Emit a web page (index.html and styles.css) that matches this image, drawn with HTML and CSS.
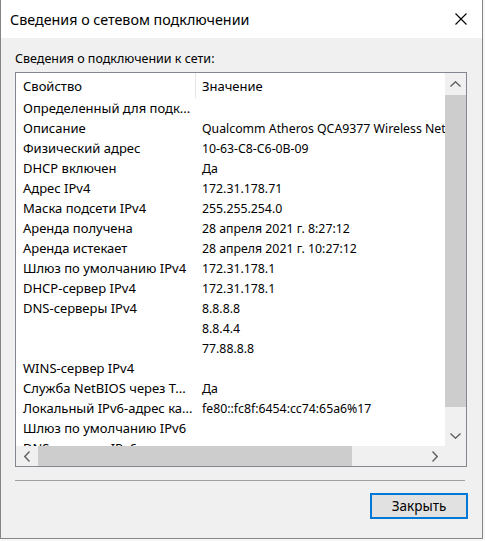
FILE: index.html
```html
<!DOCTYPE html>
<html lang="ru">
<head>
<meta charset="utf-8">
<title>Сведения о сетевом подключении</title>
<link rel="stylesheet" href="styles.css">
</head>
<body>
<div class="window">
  <div class="titlebar">
    <span class="title">Сведения о сетевом подключении</span>
    <svg class="close" width="12" height="12" viewBox="0 0 12 12"><path d="M0.5 0.5 L11.5 11.5 M11.5 0.5 L0.5 11.5" stroke="#000" stroke-width="1.1" fill="none"/></svg>
  </div>
  <div class="content">
    <div class="label">Сведения о подключении к сети:</div>
    <div class="listbox">
      <div class="viewport">
        <div class="hrow"><div class="hc1">Свойство</div><div class="hc2">Значение</div></div>
        <div class="row"><div class="c1">Определенный для подк...</div><div class="c2"></div></div>
        <div class="row"><div class="c1">Описание</div><div class="c2">Qualcomm Atheros QCA9377 Wireless Network Adapter</div></div>
        <div class="row"><div class="c1">Физический адрес</div><div class="c2">10-63-C8-C6-0B-09</div></div>
        <div class="row"><div class="c1">DHCP включен</div><div class="c2">Да</div></div>
        <div class="row"><div class="c1">Адрес IPv4</div><div class="c2">172.31.178.71</div></div>
        <div class="row"><div class="c1">Маска подсети IPv4</div><div class="c2">255.255.254.0</div></div>
        <div class="row"><div class="c1">Аренда получена</div><div class="c2">28 апреля 2021 г. 8:27:12</div></div>
        <div class="row"><div class="c1">Аренда истекает</div><div class="c2">28 апреля 2021 г. 10:27:12</div></div>
        <div class="row"><div class="c1">Шлюз по умолчанию IPv4</div><div class="c2">172.31.178.1</div></div>
        <div class="row"><div class="c1">DHCP-сервер IPv4</div><div class="c2">172.31.178.1</div></div>
        <div class="row"><div class="c1">DNS-серверы IPv4</div><div class="c2">8.8.8.8</div></div>
        <div class="row"><div class="c1"></div><div class="c2">8.8.4.4</div></div>
        <div class="row"><div class="c1"></div><div class="c2">77.88.8.8</div></div>
        <div class="row"><div class="c1">WINS-сервер IPv4</div><div class="c2"></div></div>
        <div class="row"><div class="c1">Служба NetBIOS через T...</div><div class="c2">Да</div></div>
        <div class="row"><div class="c1">Локальный IPv6-адрес ка...</div><div class="c2">fe80::fc8f:6454:cc74:65a6%17</div></div>
        <div class="row"><div class="c1">Шлюз по умолчанию IPv6</div><div class="c2"></div></div>
        <div class="row"><div class="c1">DNS-серверы IPv6</div><div class="c2"></div></div>
      </div>
      <div class="vscroll">
        <div class="sbtn"><svg width="11" height="6" viewBox="0 0 11 6"><path d="M0.5 5.5 L5.5 0.8 L10.5 5.5" stroke="#606060" stroke-width="1.4" fill="none"/></svg></div>
        <div class="vthumb"></div>
        <div class="vtrack"></div>
        <div class="sbtn"><svg width="11" height="6" viewBox="0 0 11 6"><path d="M0.5 0.5 L5.5 5.2 L10.5 0.5" stroke="#606060" stroke-width="1.4" fill="none"/></svg></div>
      </div>
      <div class="hscroll">
        <div class="hbtn"><svg width="6" height="11" viewBox="0 0 6 11"><path d="M5.5 0.5 L0.8 5.5 L5.5 10.5" stroke="#606060" stroke-width="1.4" fill="none"/></svg></div>
        <div class="hthumb"></div>
        <div class="htrack"></div>
        <div class="hbtn"><svg width="6" height="11" viewBox="0 0 6 11"><path d="M0.5 0.5 L5.2 5.5 L0.5 10.5" stroke="#606060" stroke-width="1.4" fill="none"/></svg></div>
      </div>
      <div class="corner"></div>
    </div>
    <div class="separator"></div>
    <div class="footer"><button class="btn">Закрыть</button></div>
  </div>
</div>
</body>
</html>
```
FILE: styles.css
```css
html, body {
  margin: 0;
  padding: 0;
  background: #f7f7f7;
}
body {
  font-family: "Noto Sans", "Liberation Sans", sans-serif;
  font-size: 13px;
  color: #000;
}
.window {
  width: 483px;
  height: 539px;
  box-sizing: border-box;
  border: 1px solid #858585;
  border-top: none;
  background: #f0f0f0;
  display: flex;
  flex-direction: column;
}
.titlebar {
  height: 38px;
  flex: none;
  background: #fff;
  display: flex;
  align-items: center;
  justify-content: space-between;
  padding-left: 9px;
  padding-right: 15px;
}
.title {
  font-size: 14.3px;
  color: #000;
}
.close {
  display: block;
  margin-top: -1px;
}
.content {
  padding: 0 14px;
  display: flex;
  flex-direction: column;
}
.label {
  margin-top: 13px;
  height: 16px;
  line-height: 16px;
  margin-bottom: 5px;
  font-size: 12.5px;
}
.listbox {
  width: 452px;
  height: 395px;
  box-sizing: border-box;
  border: 1px solid #828790;
  display: grid;
  grid-template-columns: 1fr 21px;
  grid-template-rows: 1fr 20px;
  background: #fff;
}
.viewport {
  overflow: hidden;
  background: #fff;
  white-space: nowrap;
}
.hrow {
  display: flex;
  height: 25px;
  align-items: stretch;
}
.hc1 {
  width: 172px;
  padding-left: 7px;
  border-right: 1px solid #e5e5e5;
  display: flex;
  align-items: center;
  flex: none;
}
.hc2 {
  padding-left: 6px;
  display: flex;
  align-items: center;
}
.row {
  display: flex;
  height: 20px;
  align-items: center;
}
.c1 {
  width: 173px;
  padding-left: 7px;
  overflow: hidden;
  flex: none;
}
.c2 {
  padding-left: 6px;
  font-size: 12.3px;
}
.vscroll {
  background: #f0f0f0;
  display: flex;
  flex-direction: column;
}
.sbtn {
  height: 21px;
  flex: none;
  display: flex;
  align-items: center;
  justify-content: center;
}
.vthumb {
  height: 312px;
  margin-top: 1px;
  background: #cdcdcd;
  flex: none;
}
.vtrack {
  flex: 1;
}
.hscroll {
  background: #f0f0f0;
  display: flex;
}
.hbtn {
  width: 21px;
  flex: none;
  display: flex;
  align-items: center;
  justify-content: center;
}
.hthumb {
  width: 314px;
  margin-left: 1px;
  background: #cdcdcd;
  flex: none;
}
.htrack {
  flex: 1;
}
.corner {
  background: #f0f0f0;
}
.separator {
  width: 450px;
  height: 1px;
  margin-top: 13px;
  background: #a0a0a0;
}
.footer {
  display: flex;
  justify-content: flex-end;
  margin-top: 12px;
}
.btn {
  width: 98px;
  height: 26px;
  box-sizing: border-box;
  border: 2px solid #0078d7;
  background: #e1e1e1;
  font-family: inherit;
  font-size: 13.5px;
  color: #000;
  padding: 0;
  margin: 0;
}
```
